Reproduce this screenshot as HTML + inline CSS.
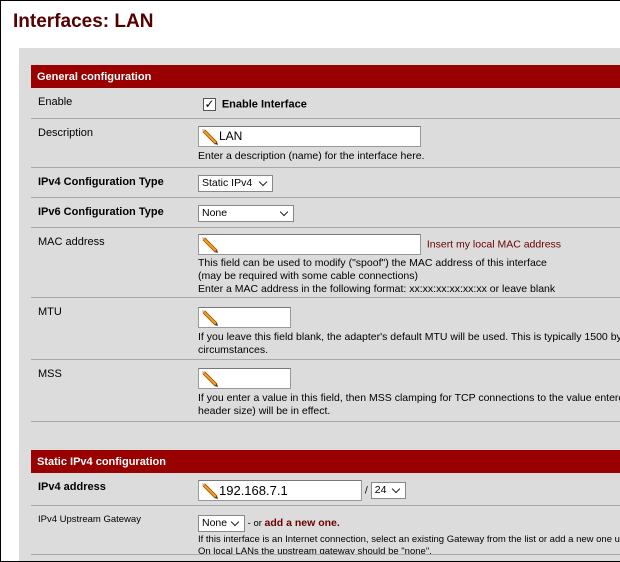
<!DOCTYPE html>
<html><head><style>
*{margin:0;padding:0;box-sizing:border-box}
body{width:620px;height:562px;overflow:hidden;background:#fff;font-family:"Liberation Sans",sans-serif;font-size:10.5px;color:#000;position:relative}
.frame{position:absolute;left:0;top:0;width:620px;height:562px;border:1px solid #000;border-right:none;z-index:5;pointer-events:none}
h1{position:absolute;left:13px;top:11px;font-size:19px;color:#550000;font-weight:bold}
.panel{position:absolute;left:19px;top:48px;width:601px;height:514px;background:#dcdcdc}
.hdr{position:absolute;left:31px;width:589px;height:23px;background:#990000;color:#fff;font-weight:bold;font-size:11px;padding:6px 0 0 6px}
.row{position:absolute;left:31px;width:589px;border-bottom:1px solid #a8a8a8;overflow:hidden}
.lbl{position:absolute;left:7px;top:8px;font-size:11px}
.b{font-weight:bold}
.fld{position:absolute;left:167px;top:7px;white-space:nowrap}
.inp{display:inline-block;height:21px;background:#fff;border:1px solid #999;border-top-color:#777;vertical-align:middle;position:relative;padding-left:20px;font-size:12px;line-height:19px}
.inp svg{position:absolute;left:2px;top:2px}
.sel{display:inline-block;height:17px;background:#fff;border:1px solid #888;font-size:10.5px;line-height:15px;padding-left:3px;position:relative;vertical-align:middle}
.sel:after{content:"";position:absolute;right:6px;top:3px;width:5px;height:5px;border-right:1.5px solid #222;border-bottom:1.5px solid #222;transform:rotate(45deg)}
.hint{line-height:13px;margin-top:3px}
.red{color:#6a0000}
</style></head><body>
<div class="frame"></div>
<h1>Interfaces: LAN</h1>
<div class="panel"></div>
<svg width="0" height="0" style="position:absolute"><defs><g id="p"><path d="M2 3 L14 15 L16 13 L4 1 Z" fill="#f0a020" stroke="#a05000" stroke-width="0.8"/><path d="M2 3 L4 1 L1 0 Z" fill="#e8b0a0"/><path d="M14 15 L16 13 L17 16 Z" fill="#333"/></g></defs></svg>
<div class="hdr" style="top:65px">General configuration</div>
<div class="row" style="top:88px;height:31px"><div class="lbl">Enable</div><div class="fld" style="top:10px;left:172px"><span style="display:inline-block;width:13px;height:13px;border:1px solid #555;background:#fff;vertical-align:middle;font-size:12px;line-height:11px;text-align:center">✓</span>&nbsp; <b style="font-size:11px;vertical-align:middle">Enable Interface</b></div></div>
<div class="row" style="top:119px;height:49px"><div class="lbl">Description</div><div class="fld" style="top:7px"><span class="inp" style="width:223px"><svg width="18" height="17"><use href="#p"/></svg>LAN</span><div class="hint">Enter a description (name) for the interface here.</div></div></div>
<div class="row" style="top:168px;height:30px"><div class="lbl b">IPv4 Configuration Type</div><div class="fld"><span class="sel" style="width:75px">Static IPv4</span></div></div>
<div class="row" style="top:198px;height:30px"><div class="lbl b">IPv6 Configuration Type</div><div class="fld"><span class="sel" style="width:96px">None</span></div></div>
<div class="row" style="top:228px;height:70px"><div class="lbl">MAC address</div><div class="fld" style="top:6px"><span class="inp" style="width:223px"><svg width="18" height="17"><use href="#p"/></svg></span> &nbsp;<span class="red">Insert my local MAC address</span><div class="hint" style="margin-top:2px">This field can be used to modify ("spoof") the MAC address of this interface<br>(may be required with some cable connections)<br>Enter a MAC address in the following format: xx:xx:xx:xx:xx:xx or leave blank</div></div></div>
<div class="row" style="top:298px;height:62px"><div class="lbl">MTU</div><div class="fld" style="top:9px"><span class="inp" style="width:93px"><svg width="18" height="17"><use href="#p"/></svg></span><div class="hint">If you leave this field blank, the adapter's default MTU will be used. This is typically 1500 bytes but can vary in some<br>circumstances.</div></div></div>
<div class="row" style="top:360px;height:62px"><div class="lbl">MSS</div><div class="fld" style="top:8px"><span class="inp" style="width:93px"><svg width="18" height="17"><use href="#p"/></svg></span><div class="hint">If you enter a value in this field, then MSS clamping for TCP connections to the value entered above minus the TCP/IP<br>header size) will be in effect.</div></div></div>
<div class="hdr" style="top:450px">Static IPv4 configuration</div>
<div class="row" style="top:473px;height:33px"><div class="lbl b">IPv4 address</div><div class="fld" style="top:7px"><span class="inp" style="width:164px;font-size:13px"><svg width="18" height="17"><use href="#p"/></svg>192.168.7.1</span> / <span class="sel" style="width:35px">24</span></div></div>
<div class="row" style="top:506px;height:49px"><div class="lbl" style="font-size:9.5px">IPv4 Upstream Gateway</div><div class="fld" style="top:9px;font-size:9.5px"><span class="sel" style="width:47px">None</span> - or <b class="red" style="font-size:10.5px">add a new one.</b><div class="hint" style="line-height:12px;margin-top:2px">If this interface is an Internet connection, select an existing Gateway from the list or add a new one using the link above.<br>On local LANs the upstream gateway should be "none".</div></div></div>
</body></html>
